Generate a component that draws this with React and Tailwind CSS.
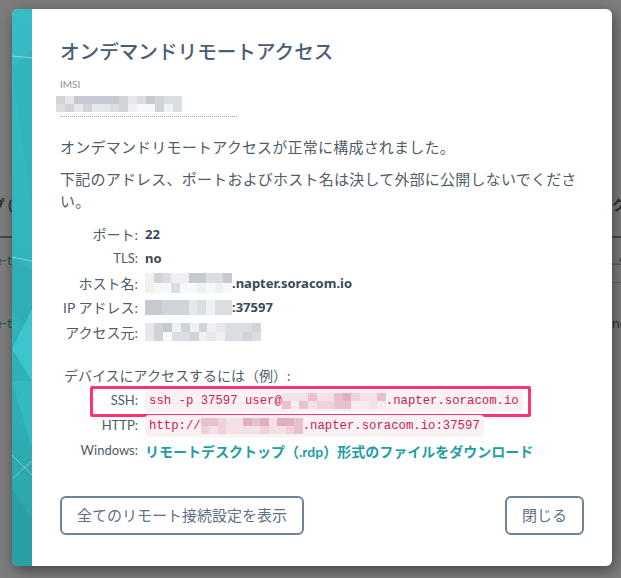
import React from "react";

const GRAY = ["bg-[#c6cad0]", "bg-[#d0d3d8]", "bg-[#dadde1]", "bg-[#e5e7ea]", "bg-[#eff0f2]", "bg-[#f7f8f9]"];
const PINK = ["bg-[#e2afbf]", "bg-[#e9c0cd]", "bg-[#efd1db]", "bg-[#f4e0e7]", "bg-[#f8ebef]"];

// blurred (pixelated) placeholder for hidden values
function Mosaic({ size, rows, cols, seed, palette, light = 0 }) {
  const rnd = (i) => {
    const x = Math.sin(seed * 97.13 + i * 13.71) * 10000;
    return x - Math.floor(x);
  };
  return (
    <span className={`inline-flex shrink-0 flex-col align-middle ${size}`}>
      {Array.from({ length: rows }).map((_, r) => (
        <span key={r} className="flex flex-1">
          {Array.from({ length: cols }).map((_, c) => {
            let idx = Math.floor(rnd(r * cols + c) * (palette.length - 1)) + r * light;
            if (idx > palette.length - 1) idx = palette.length - 1;
            return <span key={c} className={`flex-1 ${palette[idx]}`} />;
          })}
        </span>
      ))}
    </span>
  );
}

function Strip() {
  return (
    <svg className="h-full w-[20px]" viewBox="0 0 20 557" preserveAspectRatio="none">
      <defs>
        <linearGradient id="tealg" x1="0" y1="0" x2="0" y2="1">
          <stop offset="0" stopColor="#35bcc4" />
          <stop offset="0.6" stopColor="#30b2b9" />
          <stop offset="1" stopColor="#2aa3a9" />
        </linearGradient>
      </defs>
      <rect x="0" y="0" width="20" height="557" fill="url(#tealg)" />
      <polygon points="0,60 20,40 20,200" fill="#31b5bd" />
      <polygon points="0,250 20,262 20,330 0,300" fill="#2faeb5" />
      <polygon points="0,340 20,300 20,372" fill="#3bc6cd" />
      <polygon points="0,372 20,372 20,440" fill="#33bac1" />
      <polygon points="0,480 20,510 20,557 0,557" fill="#29a0a6" />
      <line x1="0" y1="47" x2="20" y2="49" stroke="#ffffff" strokeOpacity="0.45" strokeWidth="1" />
      <line x1="0" y1="248" x2="20" y2="252" stroke="#ffffff" strokeOpacity="0.4" strokeWidth="1" />
      <line x1="0" y1="446" x2="20" y2="466" stroke="#ffffff" strokeOpacity="0.35" strokeWidth="1" />
      <line x1="0" y1="470" x2="20" y2="452" stroke="#ffffff" strokeOpacity="0.35" strokeWidth="1" />
    </svg>
  );
}

function InfoRow({ label, latin, children }) {
  return (
    <div className="flex h-[24.5px] items-center">
      <div className={`w-[78px] shrink-0 text-right text-[#4f5b68] ${latin ? "text-[13px]" : "text-[14px]"}`}>
        {label}
      </div>
      <div className="ml-[7px] flex items-center font-['Noto_Sans',sans-serif] text-[13px] font-bold text-[#3b4856]">
        {children}
      </div>
    </div>
  );
}

function AccessRow({ label, children, highlight }) {
  return (
    <div className="relative flex h-[25px] items-center">
      <div className="w-[78px] shrink-0 text-right text-[13px] text-[#4f5b68]">{label}</div>
      <div className="ml-[7px] flex items-center">{children}</div>
      {highlight ? (
        <div className="pointer-events-none absolute left-[30px] top-[-3px] h-[31px] w-[441px] rounded-[2px] border-[3px] border-[#ff336f]" />
      ) : null}
    </div>
  );
}

function Code({ children }) {
  return (
    <code className="flex items-center rounded-[4px] bg-[#f9f1f4] px-[4px] py-[2px] font-['Liberation_Mono',monospace] text-[12.3px] leading-[18px] text-[#c7254e]">
      {children}
    </code>
  );
}

export default function App() {
  return (
    <div className="relative h-[578px] w-full overflow-hidden bg-[#7d7d7d] font-['Lato','Noto_Sans_CJK_JP',sans-serif]">
      {/* dimmed page behind the dialog */}
      <div className="pt-[194px] text-[14px]">
        <div className="flex h-[44px] border-b-2 border-[#4a4a4a] pt-[1px] leading-[20px]">
          <div className="flex w-[12px] justify-end overflow-hidden">
            <span className="whitespace-nowrap font-bold text-[#2f2f2f]">グループ (</span>
          </div>
          <div className="flex-1" />
          <div className="w-[9px] overflow-hidden">
            <span className="whitespace-nowrap font-bold text-[#2f2f2f]">クラスター</span>
          </div>
        </div>
        <div className="flex h-[45px] pt-[12px] leading-[20px]">
          <div className="flex w-[12px] justify-end overflow-hidden">
            <span className="whitespace-nowrap text-[#245658]">device-t</span>
          </div>
          <div className="flex-1" />
          <div className="w-[9px] overflow-hidden border-b border-[#666666]">
            <span className="whitespace-nowrap text-[#444444]">..s</span>
          </div>
        </div>
        <div className="flex h-[60px] pt-[30px] leading-[20px]">
          <div className="flex w-[12px] justify-end overflow-hidden">
            <span className="whitespace-nowrap text-[#245658]">device-t</span>
          </div>
          <div className="flex-1" />
          <div className="w-[9px] overflow-hidden">
            <span className="whitespace-nowrap text-[#333333]">none</span>
          </div>
        </div>
      </div>

      {/* dialog */}
      <div className="absolute left-[12px] top-[9px] flex w-[600px] overflow-hidden rounded-[6px] bg-white shadow-[2px_4px_14px_rgba(0,0,0,0.45)]">
        <div className="w-[20px] shrink-0">
          <Strip />
        </div>
        <div className="flex-1 px-[28px] pb-[29px] pt-[29px] text-[#505c69]">
          <h1 className="text-[19.6px] font-medium leading-[28px] text-[#4b5d72]">
            オンデマンドリモートアクセス
          </h1>
          <div className="mt-[11px] text-[10px] leading-[14px] text-[#8a9098]">IMSI</div>
          <div className="mt-[5px] w-[177px] border-b border-dotted border-[#9ba1a8] pb-[4px]">
            <div className="-ml-[4px] flex">
              <Mosaic size="w-[126px] h-[16px]" rows={2} cols={14} seed={3} palette={GRAY} light={1} />
            </div>
          </div>

          <p className="mt-[19px] text-[15px] leading-[22px] tracking-[0.22px]">
            オンデマンドリモートアクセスが正常に構成されました。
          </p>
          <p className="mt-[10px] text-[15px] leading-[22px] tracking-[0.22px]">
            下記のアドレス、ポートおよびホスト名は決して外部に公開しないでください。
          </p>

          <div className="mt-[10px]">
            <InfoRow label="ポート:">22</InfoRow>
            <InfoRow label="TLS:" latin>
              no
            </InfoRow>
            <InfoRow label="ホスト名:">
              <Mosaic size="w-[87px] h-[20px]" rows={2} cols={10} seed={7} palette={GRAY} light={2} />
              <span>.napter.soracom.io</span>
            </InfoRow>
            <InfoRow label="IP アドレス:">
              <Mosaic size="w-[87px] h-[15px]" rows={1} cols={10} seed={11} palette={GRAY} />
              <span>:37597</span>
            </InfoRow>
            <InfoRow label="アクセス元:">
              <Mosaic size="w-[116px] h-[18px]" rows={2} cols={13} seed={19} palette={GRAY} light={1} />
            </InfoRow>
          </div>

          <div className="ml-[4px] mt-[20px] text-[14px] leading-[22px]">デバイスにアクセスするには（例）:</div>

          <div className="mt-[2px]">
            <AccessRow label="SSH:" highlight>
              <Code>
                <span className="whitespace-pre">ssh -p 37597 user@</span>
                <Mosaic size="w-[104px] h-[16px]" rows={2} cols={12} seed={23} palette={PINK} light={1} />
                <span>.napter.soracom.io</span>
              </Code>
            </AccessRow>
            <AccessRow label="HTTP:">
              <Code>
                <span>http://</span>
                <Mosaic size="w-[102px] h-[16px]" rows={2} cols={12} seed={29} palette={PINK} light={1} />
                <span>.napter.soracom.io:37597</span>
              </Code>
            </AccessRow>
            <AccessRow label="Windows:">
              <a className="cursor-pointer text-[14px] font-bold text-[#1e9ea3]">
                リモートデスクトップ（.rdp）形式のファイルをダウンロード
              </a>
            </AccessRow>
          </div>

          <div className="mt-[32px] flex justify-between">
            <button
              type="button"
              className="h-[39px] rounded-[6px] border-2 border-[#6f8397] px-[15px] text-[15px] text-[#5f7084]"
            >
              全てのリモート接続設定を表示
            </button>
            <button
              type="button"
              className="h-[39px] rounded-[6px] border-2 border-[#6f8397] px-[15px] text-[15px] text-[#5f7084]"
            >
              閉じる
            </button>
          </div>
        </div>
      </div>
    </div>
  );
}
